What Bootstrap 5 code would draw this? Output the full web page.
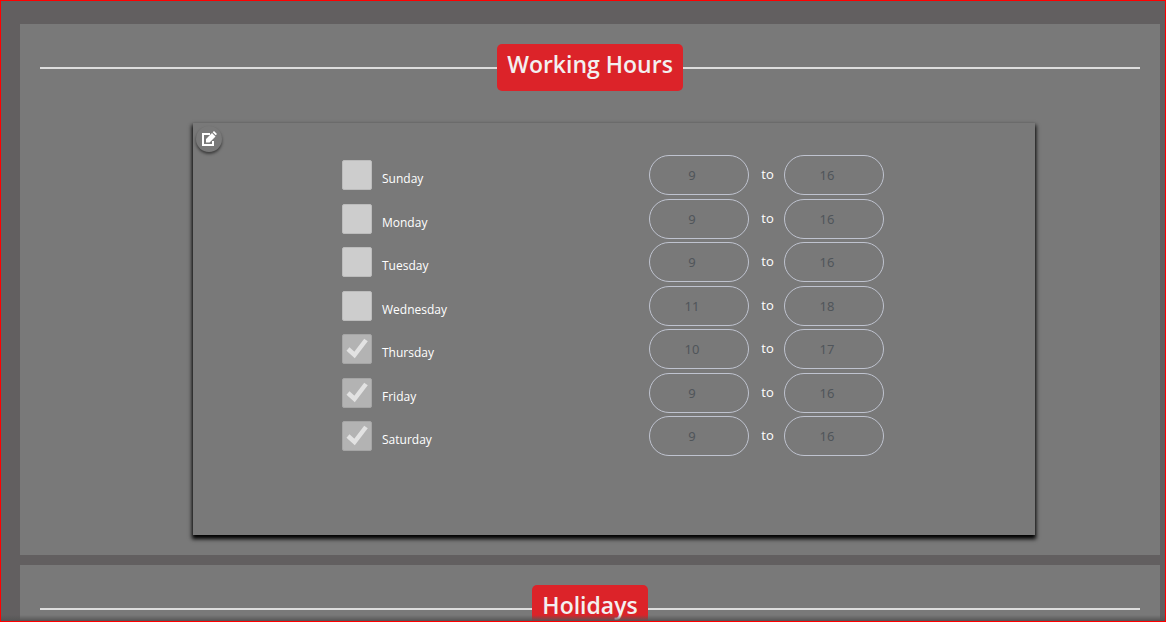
<!DOCTYPE html>
<html lang="en">
<head>
<meta charset="utf-8">
<meta name="viewport" content="width=device-width, initial-scale=1">
<title>Working Hours</title>
<link href="https://cdn.jsdelivr.net/npm/bootstrap@5.3.0/dist/css/bootstrap.min.css" rel="stylesheet">
<style>
body { font-family: "Open Sans", "Noto Sans", sans-serif; background: #625f60; }
.frame { border: 1px solid #f00; background: #625f60; padding: 23px 5px 0 19px; gap: 10px; }
.frame::after { content: ""; position: absolute; left: 0; right: 0; bottom: 0; height: 6px; background: linear-gradient(transparent, #555); }
.panel { background: #797979; padding: 20px; flex: none; }
.section-title { height: 47px; }
.section-title::before, .section-title::after { content: ""; flex: 1; height: 2px; background: #ddd; }
.section-title h2 { background: #dc2329; color: #f3f0f0; font-size: 23px; line-height: 27px; font-weight: 600; padding: 7px 10px 13px; border-radius: 5px; }
.schedule { margin: 32px 105px 0 153px; padding: 32px 151px 79px 149px; background: #797979; box-shadow: 0 3px 4px 1px #000; }
.edit-btn { top: 3px; left: 3px; width: 26px; height: 26px; background: #797979; color: #fff; box-shadow: 0 2px 3px rgba(0,0,0,.5); }
.days { height: 301px; }
.day { height: 40px; color: #fff; font-size: 13px; }
.day .form-check-input { width: 30px; height: 30px; margin: 0 10px 0 0; border: 1px solid #bcbcbc; border-radius: 2px; background-color: #cdcdcd; opacity: 1; }
.day .form-check-input:checked { background-color: #b3b3b3; border-color: #a5a5a5; background-size: 28px 28px; background-image: url("data:image/svg+xml,%3Csvg xmlns='http://www.w3.org/2000/svg' viewBox='0 0 28 28'%3E%3Cpath d='M5 14l6.500 6L23 5' fill='none' stroke='%23e2e2e2' stroke-width='4.5'/%3E%3C/svg%3E"); }
.day .form-check-label { opacity: 1 !important; font-size: 12px; line-height: 20px; padding-top: 8px; }
.day .hour { width: 100px; height: 40px; padding: 0 14px 0 0; text-align: center; font-family: "Noto Sans", sans-serif; font-size: 13px; color: #50555a; background: transparent; border: 1px solid #bfc3cf; border-radius: 20px; }
.to { width: 35px; padding-left: 2px; text-align: center; }
</style>
</head>
<body>
<main class="frame vh-100 overflow-hidden position-relative d-flex flex-column">
  <section class="panel">
    <div class="section-title d-flex align-items-center"><h2 class="m-0">Working Hours</h2></div>
    <form class="schedule position-relative">
      <button type="button" class="edit-btn btn border-0 rounded-circle p-0 position-absolute d-flex align-items-center justify-content-center" aria-label="Edit">
        <svg width="16" height="16" viewBox="0 0 16 16" aria-hidden="true"><path d="M9 3H2v11h10v-4" fill="none" stroke="currentColor" stroke-width="2"/><path d="M5 11.500V8l6-6 3.500 3.500-6 6zM11.700 1.300L13 0l3 3-1.300 1.300z" fill="currentColor"/></svg>
      </button>
      <div class="days d-flex flex-column justify-content-between" id="days"></div>
    </form>
  </section>
  <section class="panel">
    <div class="section-title d-flex align-items-center"><h2 class="m-0">Holidays</h2></div>
  </section>
</main>
<script src="https://cdn.jsdelivr.net/npm/bootstrap@5.3.0/dist/js/bootstrap.bundle.min.js"></script>
<script>
const week = [
  ["Sunday", 9, 16, false], ["Monday", 9, 16, false], ["Tuesday", 9, 16, false],
  ["Wednesday", 11, 18, false], ["Thursday", 10, 17, true], ["Friday", 9, 16, true], ["Saturday", 9, 16, true]
];
document.getElementById("days").innerHTML = week.map(([name, from, until, open]) => `
  <div class="day d-flex justify-content-between align-items-center">
    <div class="d-flex align-items-center">
      <input class="form-check-input" type="checkbox" id="${name}" disabled ${open ? "checked" : ""}>
      <label class="form-check-label" for="${name}">${name}</label>
    </div>
    <div class="d-flex align-items-center">
      <input class="hour" type="text" value="${from}" aria-label="${name} opening hour" disabled>
      <span class="to">to</span>
      <input class="hour" type="text" value="${until}" aria-label="${name} closing hour" disabled>
    </div>
  </div>`).join("");
</script>
</body>
</html>
